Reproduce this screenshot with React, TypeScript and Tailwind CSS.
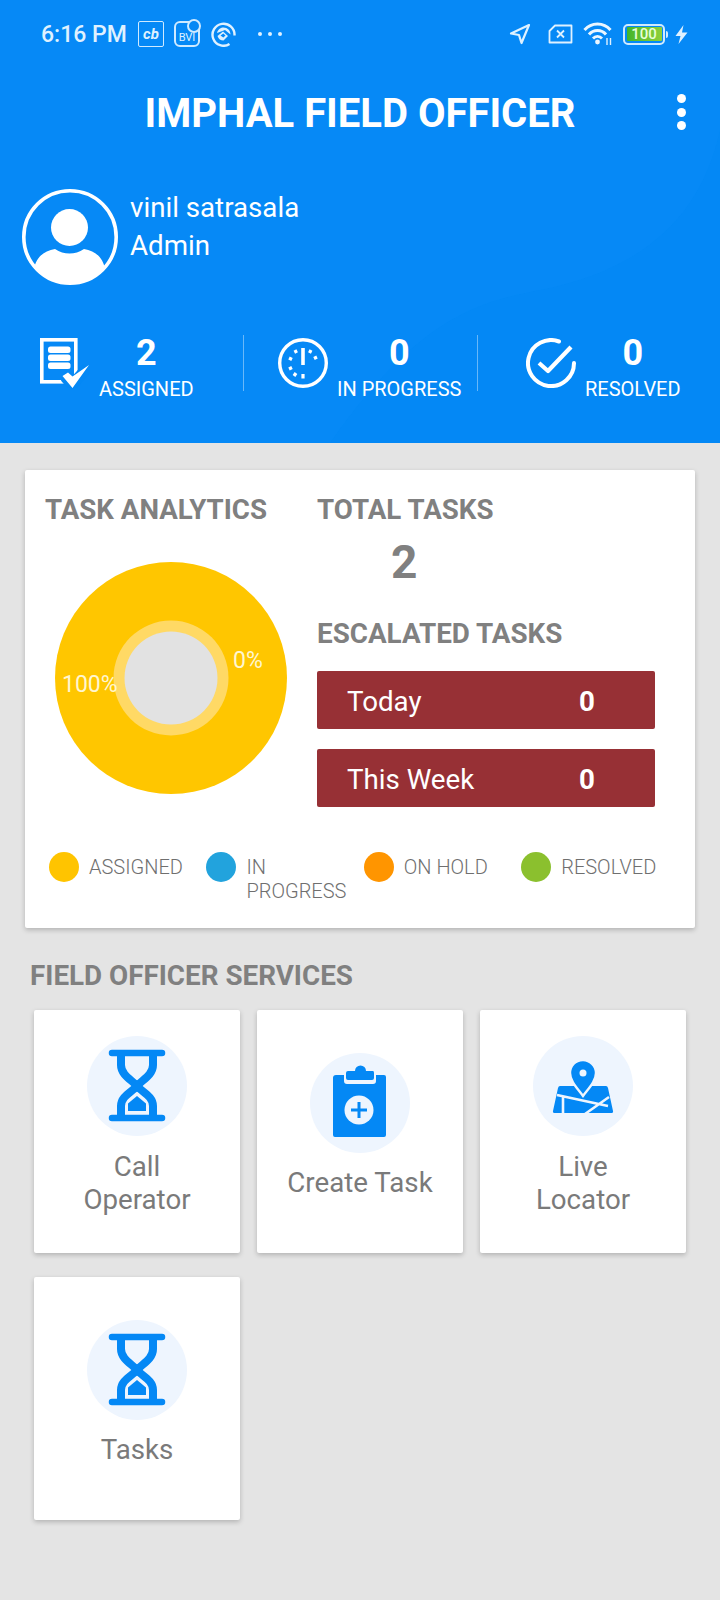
import React from "react";

const font = { fontFamily: "Roboto, sans-serif" };

function StatusBar() {
  return (
    <div className="flex h-[68px] items-center pl-[41px] pr-[32px] text-[#dff1ff]">
      <span className="w-[97px] text-[23px] font-medium leading-none">6:16 PM</span>
      <div className="flex h-[26px] w-[26px] items-center justify-center rounded-[2px] border border-[#cfeaff] text-[15px] font-bold italic leading-none">
        cb
      </div>
      <div className="relative ml-[10px] flex h-[26px] w-[26px] items-end justify-center rounded-[6px] border-2 border-[#cfeaff] pb-[1px] text-[11px] leading-[12px]">
        BVI
        <span className="absolute -right-[3px] -top-[4px] h-[14px] w-[14px] rounded-full border-2 border-[#cfeaff] bg-[#0488f5]" />
      </div>
      <svg className="ml-[11px]" width="25" height="25" viewBox="0 0 25 25" fill="none">
        <path d="M18.500 22 A11 11 0 1 1 23.500 13.500" stroke="#dff1ff" strokeWidth="2.400" />
        <path d="M6 11 C7 7 10 5.500 12.500 5.500 C16.500 5.500 19.500 8.500 19.500 12.500 L14 8 Z" fill="#dff1ff" />
        <path d="M6.500 14 L12 9.500 L17 14 L12.500 18.500 C9.500 18.500 7.500 17 6.500 14Z" fill="#dff1ff" />
        <path d="M9.500 13.500 L12.300 11.500 L14.500 13.500 L12.300 15.500Z" fill="#0488f5" />
      </svg>
      <div className="ml-[22px] flex gap-[6px]">
        <span className="h-[4px] w-[4px] rounded-full bg-[#dff1ff]" />
        <span className="h-[4px] w-[4px] rounded-full bg-[#dff1ff]" />
        <span className="h-[4px] w-[4px] rounded-full bg-[#dff1ff]" />
      </div>
      <div className="flex-1" />
      <svg width="22" height="22" viewBox="0 0 22 22" fill="none">
        <path d="M20 2 L2 10.500 L10 12 L12.500 20 Z" stroke="#dff1ff" strokeWidth="2.200" strokeLinejoin="round" />
      </svg>
      <svg className="ml-[17px]" width="25" height="20" viewBox="0 0 25 20" fill="none">
        <path d="M7 1.500 H23.500 V18.500 H1.500 V7 Z" stroke="#dff1ff" strokeWidth="1.800" strokeLinejoin="round" />
        <path d="M9 6.500 L16 13.500 M16 6.500 L9 13.500" stroke="#dff1ff" strokeWidth="1.800" />
      </svg>
      <svg className="ml-[10px]" width="30" height="24" viewBox="0 0 30 24" fill="none">
        <path d="M1.500 8 A17 17 0 0 1 27.500 8" stroke="#eaf6ff" strokeWidth="3" />
        <path d="M6 12.500 A11 11 0 0 1 23 12.500" stroke="#eaf6ff" strokeWidth="3" />
        <path d="M10 16.500 A6 6 0 0 1 19 16.500" stroke="#eaf6ff" strokeWidth="2.800" />
        <circle cx="14.500" cy="20" r="2.400" fill="#eaf6ff" />
        <path d="M24 16 V23 M27.500 16 V23" stroke="#dff1ff" strokeWidth="1.400" />
      </svg>
      <div className="ml-[10px] flex items-center">
        <div className="flex h-[21px] w-[42px] items-center rounded-[5px] border-[2.500px] border-[#cfeaff] p-[1.500px]">
          <div className="flex h-full w-full items-center justify-center rounded-[1px] bg-gradient-to-r from-[#3fb52a] to-[#8fd03a] text-[15px] font-medium leading-none text-[#e8ffd8]">
            100
          </div>
        </div>
        <span className="ml-[1px] h-[7px] w-[2px] rounded-r-full bg-[#cfeaff]" />
      </div>
      <svg className="ml-[7px]" width="13" height="19" viewBox="0 0 13 19">
        <path d="M8.500 0 L0.500 11 H5.500 L3.500 19 L12.500 7.500 H7 Z" fill="#dff1ff" />
      </svg>
    </div>
  );
}

function Avatar() {
  return (
    <svg width="96" height="96" viewBox="0 0 96 96">
      <defs>
        <clipPath id="avatar-clip">
          <circle cx="48" cy="48" r="47" />
        </clipPath>
      </defs>
      <circle cx="48" cy="48" r="46.200" fill="none" stroke="#fff" strokeWidth="3.600" />
      <circle cx="47.500" cy="38.500" r="18.500" fill="#fff" />
      <path d="M12 80 C14 68 22 62 33 60 C42 66 53 66 62 60 C73 62 81 68 83 80 V100 H12Z" fill="#fff" clipPath="url(#avatar-clip)" />
    </svg>
  );
}

function AssignedIcon() {
  return (
    <svg width="50" height="50" viewBox="0 0 50 50" fill="none">
      <rect x="1.800" y="1.800" width="34" height="42" stroke="#fff" strokeWidth="3.600" />
      <rect x="8" y="8.500" width="22.500" height="6.500" rx="2.500" fill="#fff" />
      <rect x="8" y="16.500" width="22.500" height="6.500" rx="2.500" fill="#fff" />
      <rect x="8" y="24.500" width="22.500" height="6.500" rx="2.500" fill="#fff" />
      <path d="M25 39 L32 47 L47 30" stroke="#0488f5" strokeWidth="11" />
      <path d="M22.500 38 L28 34.500 L32.500 38.500 L49 27 L32.500 50 Z" fill="#fff" />
    </svg>
  );
}

function ClockIcon() {
  return (
    <svg width="50" height="50" viewBox="0 0 50 50" fill="none">
      <circle cx="25" cy="25" r="23.300" stroke="#fff" strokeWidth="3.400" />
      <path d="M25 10 V27" stroke="#fff" strokeWidth="3.600" />
      <path d="M25 36 V40.500 M33 12 L31.500 15 M39 19 L36 20.500 M17 12 L18.500 15 M11 20 L14 21.500 M11 31 L14 29.500 M16 38 L18 35" stroke="#fff" strokeWidth="3.200" />
    </svg>
  );
}

function CheckIcon() {
  return (
    <svg width="50" height="50" viewBox="0 0 50 50" fill="none">
      <path d="M33 3.500 A23 23 0 1 0 48 25" stroke="#fff" strokeWidth="4" strokeLinecap="round" />
      <path d="M13 25 L22 33 L45 9" stroke="#fff" strokeWidth="4.200" strokeLinejoin="round" />
    </svg>
  );
}

function Stat({ icon, value, label, pad, width }: { icon: React.ReactNode; value: string; label: string; pad: string; width: string }) {
  return (
    <div className={`flex items-start ${pad} ${width}`}>
      {icon}
      <div className="ml-[9px] flex flex-col items-center text-white">
        <span className="-mt-[6px] text-[36px] font-bold leading-[42px]">{value}</span>
        <span className="mt-[3px] text-[20px] leading-[24px]">{label}</span>
      </div>
    </div>
  );
}

function Donut() {
  return (
    <div className="relative h-[232px] w-[232px]">
      <svg width="232" height="232" viewBox="0 0 232 232">
        <circle cx="116" cy="116" r="116" fill="#ffc600" />
        <circle cx="116" cy="116" r="57.500" fill="#ffd965" />
        <circle cx="116" cy="116" r="46.500" fill="#e2e2e2" />
      </svg>
      <span className="absolute left-[7px] top-[109px] text-[23px] leading-[28px] text-[#fff6d0]">100%</span>
      <span className="absolute left-[178px] top-[85px] text-[23px] leading-[28px] text-[#fff6d0]">0%</span>
    </div>
  );
}

function LegendItem({ color, children }: { color: string; children: React.ReactNode }) {
  return (
    <div className="flex w-[157.400px] items-start">
      <span className={`h-[30px] w-[30px] shrink-0 rounded-full ${color}`} />
      <span className="ml-[10px] mt-[3px] text-[20px] font-light leading-[24px] text-[#6f6f6f]">{children}</span>
    </div>
  );
}

function Escalated({ label }: { label: string }) {
  return (
    <div className="flex h-[58px] w-[338px] items-center rounded-[2px] bg-[#973035] pl-[30px] pt-[3px] text-[27.700px] text-white">
      <span className="w-[232px]">{label}</span>
      <span className="w-[12px] font-bold">0</span>
    </div>
  );
}

function Hourglass() {
  return (
    <svg width="100" height="100" viewBox="0 0 100 100" fill="none">
      <path d="M25 17 H75 M25 82 H75" stroke="#0488f5" strokeWidth="6.500" strokeLinecap="round" />
      <path d="M34 18 V29 C34 39 45 44 50 50 C55 44 66 39 66 29 V18" stroke="#0488f5" strokeWidth="8" />
      <path d="M34 80 V70 C34 60 45 56 50 50 C55 56 66 60 66 70 V80" stroke="#0488f5" strokeWidth="8" />
      <path d="M41 75 V67.500 L50 60 L59 67.500 V75 Z" fill="#0488f5" />
    </svg>
  );
}

function Clipboard() {
  return (
    <svg width="100" height="100" viewBox="0 2 100 100">
      <path d="M26 24 H34 V30 Q34 33 37 33 H63 Q66 33 66 30 V24 H74 Q76 24 76 26 V84 Q76 86 74 86 H25 Q23 86 23 84 V27 Q23 24 26 24Z" fill="#0488f5" />
      <path d="M38 20 H45 A5.500 5.500 0 0 1 56 20 H63 Q64 20 64 22 V27 Q64 29 62 29 H38 Q36 29 36 27 V22 Q36 20 38 20Z" fill="#0488f5" />
      <circle cx="49" cy="59" r="14.500" fill="#eef5fe" />
      <path d="M49 51 V67 M41 59 H57" stroke="#0488f5" strokeWidth="3" />
    </svg>
  );
}

function MapPin() {
  return (
    <svg width="100" height="100" viewBox="0 0 100 100">
      <path d="M27 50 H73 Q74.500 50 75 52 L80 75 Q80.500 77 78 77 H22 Q19.500 77 20 75 L25 52 Q25.500 50 27 50Z" fill="#0488f5" />
      <path d="M24 59 L75 70 M52 78 L76 61 M30 60 V78" stroke="#eef5fe" strokeWidth="2.600" fill="none" />
      <path d="M50 24 C42 24 37 30 37 37 C37 45 44 52 50 60 C56 52 63 45 63 37 C63 30 57 24 50 24Z" fill="#0488f5" stroke="#eef5fe" strokeWidth="2.400" />
      <circle cx="50" cy="37" r="3.500" fill="#eef5fe" />
    </svg>
  );
}

function ServiceCard({ icon, lines }: { icon: React.ReactNode; lines: string[] }) {
  const twoLine = lines.length > 1;
  return (
    <div className={`flex h-[243px] w-[206px] flex-col items-center justify-center rounded-[2px] bg-white shadow-[0_2px_5px_rgba(0,0,0,0.22)] ${twoLine ? "pb-[11px]" : "pb-[12px]"}`}>
      <div className="h-[100px] w-[100px] rounded-full bg-[#eef5fe]">{icon}</div>
      <div className={`text-center text-[27.700px] leading-[33px] text-[#7a7a7a] ${twoLine ? "mt-[14px]" : "mt-[13px]"}`}>
        {lines.map((l) => (
          <div key={l}>{l}</div>
        ))}
      </div>
    </div>
  );
}

export default function App() {
  return (
    <div className="h-[1600px] w-[720px] overflow-hidden bg-[#e4e4e4]" style={font}>
      <header className="relative h-[443px] overflow-hidden bg-[#0488f5]">
        <svg className="absolute left-0 top-0" width="720" height="443" viewBox="0 0 720 443">
          <path d="M0 0 H720 V130 C700 220 640 270 540 290 C480 302 420 315 330 443 H0 Z" fill="#0a8df8" opacity="0.4" />
        </svg>
        <div className="relative">
          <StatusBar />
          <div className="mt-[16px] grid h-[56px] grid-cols-[60px_1fr_60px] items-center">
            <div />
            <h1 className="pt-[3px] text-center text-[40px] font-bold leading-none text-white">IMPHAL FIELD OFFICER</h1>
            <div className="flex flex-col gap-[4.500px] pl-[17px]">
              <span className="h-[9px] w-[9px] rounded-full bg-white" />
              <span className="h-[9px] w-[9px] rounded-full bg-white" />
              <span className="h-[9px] w-[9px] rounded-full bg-white" />
            </div>
          </div>
          <div className="mt-[49px] flex pl-[22px]">
            <Avatar />
            <div className="ml-[12px] text-[27.700px] leading-[38px] text-white">
              <div>vinil satrasala</div>
              <div>Admin</div>
            </div>
          </div>
          <div className="mt-[50px] flex items-start">
            <Stat icon={<AssignedIcon />} value="2" label="ASSIGNED" pad="pl-[40px] pt-[3px]" width="w-[243px]" />
            <div className="h-[56px] w-[1px] bg-white/40" />
            <Stat icon={<ClockIcon />} value="0" label="IN PROGRESS" pad="pl-[34px] pt-[3px]" width="w-[233px]" />
            <div className="h-[56px] w-[1px] bg-white/40" />
            <Stat icon={<CheckIcon />} value="0" label="RESOLVED" pad="pl-[48px] pt-[3px]" width="w-[242px]" />
          </div>
        </div>
      </header>

      <main>
        <section className="ml-[25px] mt-[27px] h-[458px] w-[670px] rounded-[2px] bg-white pt-[23px] shadow-[0_2px_5px_rgba(0,0,0,0.22)]">
          <div className="flex">
            <div className="ml-[20px] w-[272px]">
              <h2 className="text-[27.700px] font-bold leading-[34px] text-[#808080]">TASK ANALYTICS</h2>
              <div className="ml-[10px] mt-[35px]">
                <Donut />
              </div>
            </div>
            <div>
              <h2 className="text-[27.700px] font-bold leading-[34px] text-[#808080]">TOTAL TASKS</h2>
              <div className="ml-[74px] mt-[8px] text-[46px] font-bold leading-[54px] text-[#808080]">2</div>
              <h2 className="mt-[28px] text-[27.800px] font-bold leading-[34px] text-[#808080]">ESCALATED TASKS</h2>
              <div className="mt-[20px] flex flex-col gap-[20px]">
                <Escalated label="Today" />
                <Escalated label="This Week" />
              </div>
            </div>
          </div>
          <div className="ml-[24px] mt-[45px] flex">
            <LegendItem color="bg-[#ffc400]">ASSIGNED</LegendItem>
            <LegendItem color="bg-[#22a3dd]">
              IN
              <br />
              PROGRESS
            </LegendItem>
            <LegendItem color="bg-[#ff9500]">ON HOLD</LegendItem>
            <LegendItem color="bg-[#8bc02e]">RESOLVED</LegendItem>
          </div>
        </section>

        <h2 className="ml-[30px] mt-[31px] text-[27.800px] font-bold leading-[34px] text-[#808080]">FIELD OFFICER SERVICES</h2>
        <div className="ml-[34px] mt-[17px] grid w-[652px] grid-cols-[206px_206px_206px] gap-x-[17px] gap-y-[24px]">
          <ServiceCard icon={<Hourglass />} lines={["Call", "Operator"]} />
          <ServiceCard icon={<Clipboard />} lines={["Create Task"]} />
          <ServiceCard icon={<MapPin />} lines={["Live", "Locator"]} />
          <ServiceCard icon={<Hourglass />} lines={["Tasks"]} />
        </div>
      </main>
    </div>
  );
}
